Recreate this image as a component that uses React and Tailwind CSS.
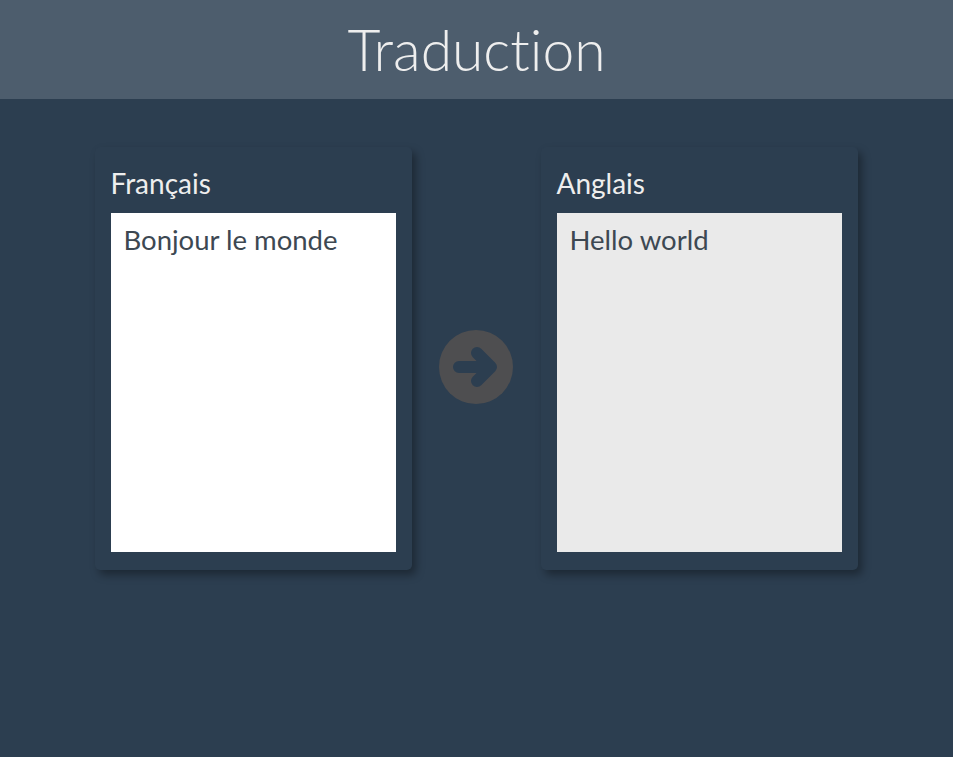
import { useState } from "react";

export default function App() {
  const [source, setSource] = useState("Bonjour le monde");

  return (
    <div className="min-h-screen bg-[#2c3e50] font-['Lato','Noto_Sans',sans-serif] [font-variant-ligatures:none]">
      {/* HEADER */}
      <div className="h-[99px] bg-[#4d5d6d] flex items-center justify-center">
        <h1 className="text-[57px] font-light text-[#eeeeee] leading-none">
          Traduction
        </h1>
      </div>

      {/* MAIN */}
      <div className="flex justify-center items-start pt-[48px] pr-[1px]">
        <Panel label="Français">
          <textarea
            value={source}
            onChange={(e) => setSource(e.target.value)}
            className="w-full h-full resize-none bg-white text-[#3d4852] text-[27.5px] leading-[1.2] px-[13px] pt-[10px] outline-none"
          />
        </Panel>

        <div className="ml-[27px] mr-[28px] mt-[183px]">
          <svg width="74" height="74" viewBox="0 0 74 74">
            <circle cx="37" cy="37" r="37" fill="#4e4e50" />
            <path
              d="M20 37H51M38 23L52 37L38 51"
              fill="none"
              stroke="#2c3e50"
              strokeWidth="12"
              strokeLinecap="round"
              strokeLinejoin="round"
            />
          </svg>
        </div>

        <Panel label="Anglais">
          <textarea
            readOnly
            value="Hello world"
            className="w-full h-full resize-none bg-[#eaeaea] text-[#3d4852] text-[27.5px] leading-[1.2] px-[13px] pt-[10px] outline-none"
          />
        </Panel>
      </div>
    </div>
  );
}

/* Panel */
function Panel({ label, children }) {
  return (
    <div className="w-[317px] h-[423px] bg-[#2c3e50] rounded-[5px] shadow-[4px_5px_8px_rgba(0,0,0,0.35)] px-4 pt-[18px] pb-[18px] flex flex-col">
      <div className="text-[28px] text-[#eeeeee] leading-[36px] mb-[12px]">
        {label}
      </div>
      <div className="flex-1">{children}</div>
    </div>
  );
}
